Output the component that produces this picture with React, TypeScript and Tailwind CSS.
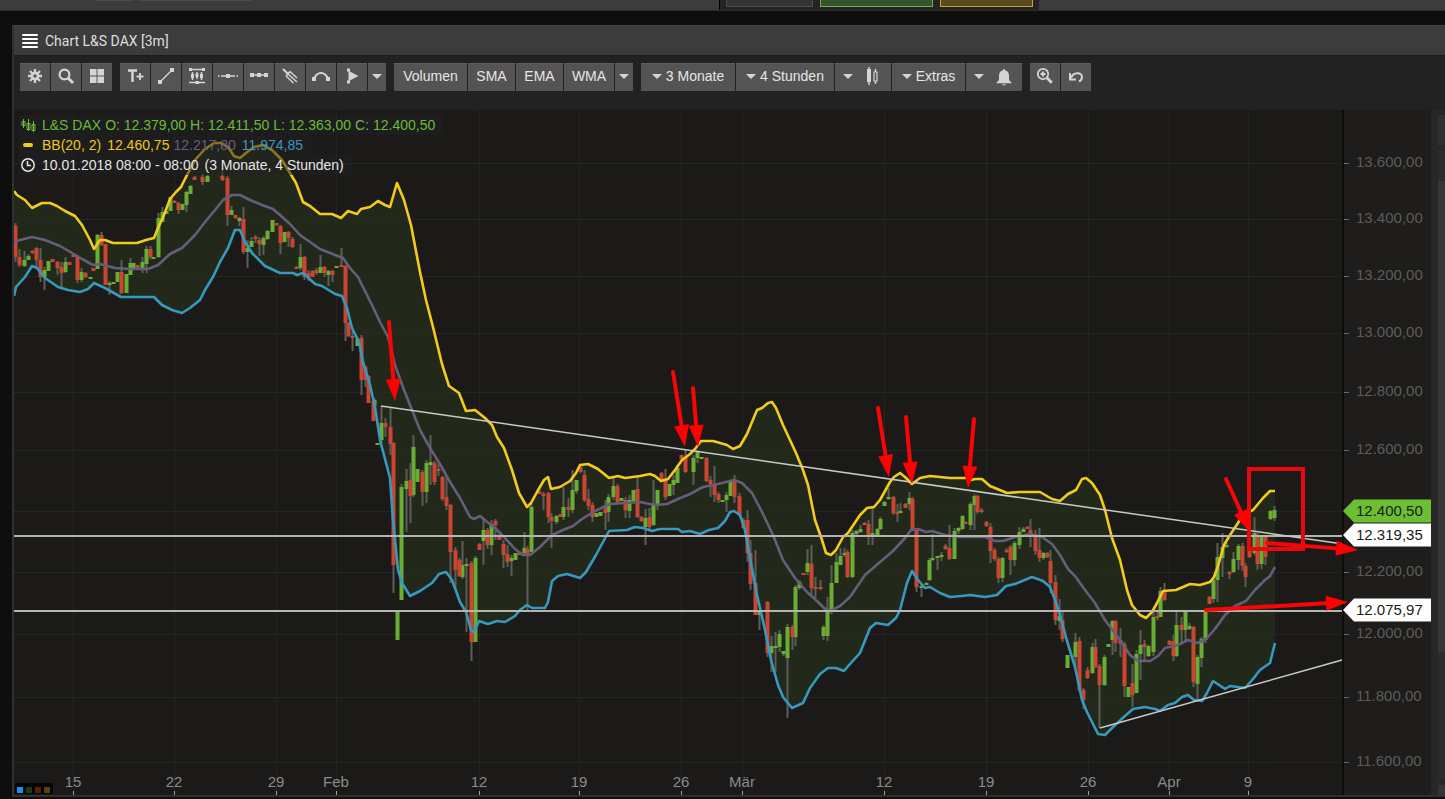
import React from 'react';

type Point = [number, number];
// x, high, body top, body bottom, low
type Candle = [number, number, number, number, number];

const upper: Point[] = [
  [14, 191], [17, 195], [25, 200], [32, 208], [42, 203], [50, 203], [57, 206], [65, 211], [75, 216], [82, 225], [90, 240], [94, 249],
  [100, 240], [105, 240], [113, 243], [137, 243], [146, 240], [154, 238], [158, 228], [164, 215], [170, 199], [176, 192], [181, 187],
  [186, 177], [195, 160], [205, 149], [214, 143], [221, 143], [228, 147], [234, 156], [240, 158], [246, 153], [254, 147], [263, 145],
  [272, 150], [282, 160], [290, 173], [296, 183], [303, 202], [310, 206], [320, 214], [332, 214], [341, 218], [348, 211], [357, 214],
  [361, 209], [370, 207], [378, 201], [385, 205], [390, 207], [397, 183], [404, 200], [411, 225], [420, 272], [426, 300], [433, 327],
  [442, 364], [449, 386], [459, 393], [466, 411], [475, 410], [485, 418], [492, 425], [497, 437], [504, 448], [512, 470], [519, 493],
  [527, 507], [531, 503], [537, 492], [544, 480], [548, 477], [551, 489], [560, 487], [570, 481], [576, 473], [580, 465], [588, 464],
  [598, 469], [609, 478], [618, 476], [625, 478], [640, 476], [650, 474], [655, 476], [661, 481], [668, 479], [675, 470], [682, 460],
  [690, 454], [695, 449], [701, 441], [713, 441], [727, 445], [733, 449], [740, 446], [747, 434], [757, 410], [762, 408], [768, 403],
  [772, 402], [776, 408], [783, 425], [790, 440], [796, 453], [803, 470], [808, 485], [815, 520], [822, 540], [826, 553], [831, 555],
  [836, 550], [843, 537], [848, 533], [854, 524], [860, 515], [867, 508], [874, 507], [880, 500], [890, 482], [894, 477], [900, 473],
  [905, 477], [912, 484], [920, 478], [930, 476], [950, 478], [966, 478], [971, 480], [975, 479], [982, 479], [990, 486], [1007, 493],
  [1020, 492], [1040, 492], [1052, 499], [1060, 501], [1068, 494], [1076, 490], [1082, 479], [1086, 478], [1092, 483], [1100, 495],
  [1105, 510], [1112, 538], [1120, 560], [1127, 590], [1132, 605], [1140, 615], [1146, 618], [1152, 612], [1157, 603], [1163, 591],
  [1176, 590], [1190, 584], [1200, 585], [1210, 582], [1214, 577], [1218, 566], [1224, 545], [1230, 535], [1240, 520], [1245, 514],
  [1253, 510], [1263, 498], [1270, 491], [1275, 491],
];

const middle: Point[] = [
  [14, 242], [20, 240], [32, 237], [45, 240], [60, 246], [72, 253], [82, 259], [93, 265], [100, 264], [115, 268], [130, 269],
  [148, 269], [158, 265], [170, 254], [182, 248], [195, 235], [205, 222], [215, 210], [223, 200], [232, 195], [240, 195], [250, 200],
  [262, 205], [273, 209], [280, 215], [290, 224], [300, 235], [310, 242], [320, 249], [335, 255], [343, 258], [350, 268], [358, 277],
  [366, 293], [372, 305], [380, 322], [388, 337], [395, 365], [404, 390], [412, 410], [420, 430], [430, 448], [440, 464], [450, 482],
  [460, 498], [470, 517], [474, 519], [480, 516], [486, 521], [495, 528], [505, 538], [515, 549], [523, 555], [530, 555], [540, 547],
  [552, 535], [563, 530], [573, 526], [582, 519], [595, 511], [610, 504], [625, 503], [640, 502], [655, 505], [667, 504], [678, 499],
  [690, 494], [703, 487], [718, 484], [734, 480], [742, 483], [752, 493], [763, 514], [773, 535], [783, 560], [795, 578], [807, 592],
  [818, 602], [824, 608], [830, 611], [840, 606], [850, 597], [865, 575], [880, 562], [893, 551], [905, 538], [911, 530], [918, 529],
  [926, 532], [932, 531], [945, 535], [960, 537], [985, 537], [995, 541], [1003, 541], [1015, 537], [1030, 534], [1042, 537],
  [1052, 544], [1060, 555], [1068, 569], [1075, 576], [1085, 590], [1095, 603], [1105, 620], [1120, 640], [1130, 655], [1138, 661],
  [1150, 661], [1158, 656], [1165, 648], [1178, 645], [1188, 640], [1198, 643], [1206, 639], [1215, 629], [1225, 615], [1235, 606],
  [1246, 601], [1255, 590], [1265, 580], [1270, 576], [1275, 567],
];

const lower: Point[] = [
  [14, 296], [16, 287], [25, 277], [32, 266], [37, 268], [45, 278], [58, 287], [68, 290], [80, 292], [88, 289], [94, 283], [105, 288],
  [121, 297], [154, 297], [162, 305], [172, 310], [182, 313], [190, 308], [200, 300], [205, 290], [213, 277], [220, 262], [228, 248],
  [235, 230], [240, 230], [245, 242], [252, 253], [265, 266], [280, 273], [293, 273], [297, 275], [303, 273], [315, 284], [322, 286],
  [335, 294], [342, 296], [347, 308], [352, 328], [359, 342], [363, 362], [370, 385], [375, 407], [380, 440], [390, 478], [393, 520],
  [398, 570], [402, 583], [410, 596], [420, 591], [432, 583], [439, 574], [446, 572], [452, 580], [460, 602], [466, 612], [471, 630],
  [474, 632], [479, 621], [488, 624], [497, 621], [505, 622], [515, 616], [520, 610], [527, 605], [532, 608], [545, 608], [548, 602],
  [552, 581], [558, 576], [567, 574], [580, 578], [586, 572], [596, 555], [609, 531], [627, 530], [635, 527], [643, 528], [652, 531],
  [660, 529], [678, 529], [682, 532], [690, 531], [700, 534], [709, 530], [718, 528], [725, 521], [730, 512], [734, 511], [740, 515],
  [745, 530], [750, 558], [757, 595], [765, 630], [771, 660], [778, 685], [783, 697], [792, 708], [803, 703], [810, 688], [820, 674],
  [828, 668], [836, 668], [844, 671], [850, 664], [860, 653], [870, 628], [876, 623], [888, 625], [896, 618], [900, 610], [907, 583],
  [912, 571], [918, 580], [925, 588], [930, 587], [940, 593], [950, 597], [962, 596], [970, 595], [985, 597], [997, 595], [1006, 586],
  [1015, 584], [1032, 577], [1043, 581], [1050, 587], [1055, 600], [1060, 615], [1067, 641], [1075, 667], [1082, 700], [1087, 712],
  [1098, 734], [1105, 735], [1112, 728], [1125, 716], [1133, 709], [1145, 707], [1155, 709], [1160, 711], [1168, 705], [1175, 703],
  [1182, 697], [1188, 695], [1194, 700], [1202, 701], [1207, 693], [1213, 681], [1225, 689], [1230, 686], [1245, 688], [1253, 679],
  [1260, 670], [1270, 663], [1275, 643],
];

const rising: Candle[] = [
  [24, 251, 260, 266, 267], [28, 254, 256, 260, 260], [44, 267, 270, 277, 290], [48, 261, 261, 271, 271], [65, 257, 262, 272, 273],
  [81, 268, 272, 280, 282], [90, 277, 277, 279, 279], [97, 234, 235, 269, 269], [109, 281, 283, 285, 295], [113, 282, 282, 284, 284],
  [117, 272, 272, 282, 282], [126, 274, 274, 293, 293], [130, 258, 263, 275, 275], [133, 263, 263, 268, 268], [142, 257, 262, 268, 273],
  [146, 246, 249, 264, 273], [153, 257, 257, 259, 259], [158, 213, 218, 257, 258], [162, 207, 212, 222, 222], [166, 211, 211, 214, 214],
  [170, 197, 197, 211, 211], [182, 204, 204, 210, 210], [186, 191, 192, 205, 212], [190, 185, 186, 194, 194], [207, 175, 176, 182, 182],
  [231, 206, 210, 215, 215], [239, 217, 218, 221, 226], [247, 240, 248, 252, 268], [251, 237, 241, 247, 247], [263, 236, 238, 245, 255],
  [267, 230, 231, 239, 240], [272, 220, 220, 232, 232], [284, 232, 232, 242, 242], [300, 244, 257, 268, 270], [320, 255, 267, 273, 273],
  [328, 270, 271, 275, 286], [336, 266, 266, 268, 268], [357, 338, 339, 346, 346], [374, 398, 400, 406, 406], [377, 443, 443, 445, 445],
  [381, 406, 423, 440, 443], [397, 611, 611, 640, 640], [401, 484, 487, 600, 600], [406, 469, 481, 489, 532], [413, 435, 447, 495, 497],
  [417, 469, 469, 482, 482], [426, 460, 463, 492, 503], [430, 435, 462, 465, 485], [462, 541, 565, 577, 579], [466, 558, 564, 566, 632],
  [475, 556, 558, 642, 642], [483, 518, 530, 541, 565], [491, 520, 524, 545, 555], [511, 555, 558, 561, 576], [515, 553, 553, 560, 560],
  [524, 532, 548, 553, 555], [531, 503, 507, 552, 552], [556, 515, 516, 522, 524], [563, 487, 507, 517, 520], [572, 470, 490, 510, 513],
  [576, 480, 480, 491, 494], [596, 513, 513, 517, 517], [600, 512, 512, 516, 516], [608, 494, 497, 512, 522], [613, 477, 486, 497, 500],
  [621, 498, 498, 501, 501], [629, 495, 500, 511, 518], [633, 490, 490, 501, 501], [645, 509, 518, 527, 545], [653, 480, 505, 525, 526],
  [657, 490, 490, 506, 510], [669, 484, 484, 496, 496], [673, 475, 480, 485, 495], [677, 465, 468, 483, 483], [693, 455, 458, 472, 485],
  [697, 450, 451, 458, 463], [701, 457, 457, 459, 459], [722, 500, 500, 502, 502], [726, 492, 495, 500, 512], [730, 480, 481, 496, 496],
  [759, 610, 612, 615, 630], [771, 636, 646, 653, 672], [775, 632, 646, 648, 672], [779, 630, 634, 647, 652], [783, 651, 651, 654, 656],
  [787, 624, 627, 658, 718], [795, 585, 587, 637, 646], [799, 580, 582, 588, 590], [807, 549, 563, 572, 575], [823, 625, 627, 636, 640],
  [827, 597, 612, 636, 641], [831, 565, 583, 612, 614], [836, 553, 562, 583, 583], [840, 548, 556, 565, 565], [844, 548, 553, 555, 557],
  [852, 530, 533, 577, 578], [856, 530, 531, 534, 535], [860, 525, 529, 532, 533], [872, 507, 533, 536, 545], [877, 528, 529, 536, 536],
  [880, 517, 519, 529, 530], [884, 501, 502, 506, 506], [888, 488, 497, 499, 500], [900, 503, 511, 513, 513], [909, 492, 498, 504, 510],
  [921, 584, 586, 588, 597], [926, 582, 583, 585, 585], [929, 558, 560, 580, 581], [932, 534, 558, 560, 561], [937, 556, 556, 558, 570],
  [941, 552, 555, 557, 561], [954, 528, 531, 559, 559], [958, 527, 528, 531, 534], [962, 515, 516, 529, 530], [970, 502, 504, 525, 530],
  [974, 494, 496, 505, 530], [1002, 557, 558, 578, 582], [1014, 541, 543, 560, 566], [1019, 527, 532, 545, 549], [1023, 527, 529, 532, 532],
  [1043, 552, 553, 558, 560], [1059, 599, 616, 621, 630], [1067, 655, 655, 668, 668], [1075, 633, 642, 657, 670], [1092, 643, 647, 673, 674],
  [1104, 655, 657, 685, 686], [1108, 644, 644, 647, 647], [1112, 620, 621, 640, 655], [1128, 687, 687, 697, 697], [1136, 650, 654, 693, 693],
  [1140, 630, 645, 654, 680], [1148, 645, 646, 656, 657], [1153, 612, 617, 652, 656], [1160, 587, 591, 617, 617], [1176, 612, 625, 656, 657],
  [1185, 611, 612, 630, 642], [1189, 623, 626, 629, 630], [1197, 655, 657, 684, 700], [1201, 637, 639, 658, 667], [1205, 610, 611, 640, 643],
  [1213, 578, 580, 599, 603], [1217, 543, 557, 580, 602], [1222, 533, 547, 558, 577], [1226, 543, 545, 547, 548], [1233, 552, 559, 572, 573],
  [1238, 544, 546, 560, 570], [1254, 517, 533, 553, 555], [1261, 535, 537, 564, 569], [1270, 510, 511, 519, 520], [1274, 506, 510, 518, 521],
];

const falling: Candle[] = [
  [15, 223, 226, 257, 262], [19, 249, 257, 265, 267], [32, 250, 251, 253, 254], [36, 247, 248, 260, 267], [40, 248, 260, 277, 282],
  [52, 259, 259, 262, 262], [57, 261, 262, 268, 275], [61, 262, 267, 273, 287], [69, 262, 262, 265, 265], [73, 255, 255, 257, 257],
  [77, 256, 257, 280, 283], [85, 272, 273, 277, 278], [93, 268, 268, 271, 271], [101, 232, 235, 245, 246], [105, 244, 244, 285, 285],
  [121, 260, 272, 293, 294], [137, 265, 265, 268, 268], [150, 246, 249, 257, 259], [174, 200, 201, 203, 203], [178, 202, 203, 210, 214],
  [194, 176, 177, 180, 180], [202, 174, 177, 182, 185], [222, 168, 176, 180, 181], [227, 176, 178, 215, 226], [235, 215, 215, 218, 219],
  [243, 207, 219, 252, 254], [255, 235, 237, 239, 243], [259, 237, 240, 244, 256], [276, 223, 223, 225, 226], [280, 225, 226, 243, 254],
  [288, 231, 232, 238, 247], [292, 237, 239, 247, 248], [296, 266, 267, 269, 269], [304, 256, 257, 277, 280], [308, 270, 273, 277, 281],
  [312, 270, 271, 277, 277], [316, 268, 270, 273, 275], [324, 266, 267, 273, 277], [332, 270, 271, 275, 282], [341, 248, 265, 267, 267],
  [345, 265, 266, 323, 341], [348, 322, 323, 336, 337], [352, 330, 336, 338, 351], [361, 335, 338, 380, 395], [365, 366, 367, 380, 387],
  [368, 375, 376, 403, 403], [373, 398, 401, 421, 421], [385, 418, 423, 427, 437], [390, 407, 427, 444, 455], [393, 442, 443, 565, 593],
  [410, 463, 480, 496, 523], [422, 470, 472, 492, 506], [434, 461, 463, 482, 485], [438, 463, 469, 471, 476], [442, 476, 477, 499, 501],
  [446, 477, 497, 506, 510], [450, 504, 505, 552, 583], [455, 547, 550, 570, 590], [459, 558, 560, 576, 577], [471, 561, 563, 642, 661],
  [479, 543, 544, 550, 550], [487, 528, 530, 545, 549], [495, 519, 521, 525, 540], [499, 531, 536, 540, 540], [503, 540, 544, 555, 568],
  [507, 545, 554, 562, 567], [519, 551, 552, 555, 555], [527, 546, 549, 554, 610], [539, 490, 492, 494, 494], [543, 492, 494, 496, 510],
  [548, 492, 493, 517, 523], [551, 513, 517, 521, 548], [560, 514, 514, 517, 517], [568, 498, 507, 510, 517], [580, 466, 467, 472, 473],
  [584, 470, 475, 500, 502], [588, 489, 499, 506, 510], [592, 502, 505, 517, 522], [605, 500, 508, 513, 530], [617, 484, 486, 502, 503],
  [625, 497, 500, 510, 518], [637, 477, 489, 517, 518], [641, 516, 517, 521, 522], [649, 508, 517, 527, 530], [661, 472, 473, 480, 481],
  [665, 469, 480, 497, 500], [681, 455, 455, 459, 459], [685, 450, 457, 472, 473], [706, 457, 458, 481, 482], [710, 476, 480, 484, 497],
  [714, 466, 485, 495, 502], [718, 492, 494, 500, 503], [734, 475, 481, 497, 503], [739, 493, 496, 515, 516], [743, 518, 520, 528, 528],
  [747, 510, 520, 553, 562], [750, 540, 553, 584, 590], [755, 550, 583, 615, 615], [767, 601, 602, 653, 657], [792, 625, 627, 637, 650],
  [803, 573, 573, 575, 575], [811, 545, 564, 588, 595], [815, 577, 587, 589, 598], [820, 580, 587, 589, 590], [847, 550, 552, 577, 578],
  [864, 522, 523, 525, 525], [868, 520, 524, 535, 545], [893, 496, 497, 513, 515], [897, 504, 512, 514, 522], [905, 503, 504, 508, 508],
  [912, 497, 499, 529, 530], [916, 528, 530, 587, 592], [945, 544, 546, 549, 550], [949, 525, 548, 559, 560], [965, 521, 522, 524, 524],
  [977, 495, 496, 512, 514], [981, 508, 510, 512, 513], [986, 521, 522, 526, 527], [990, 523, 527, 551, 563], [994, 548, 550, 559, 561],
  [998, 557, 559, 578, 583], [1006, 548, 550, 552, 553], [1010, 545, 547, 560, 575], [1027, 526, 527, 529, 529], [1030, 519, 530, 535, 547],
  [1035, 530, 535, 551, 555], [1039, 528, 550, 558, 562], [1047, 552, 553, 557, 558], [1050, 550, 561, 583, 593], [1055, 575, 582, 620, 625],
  [1062, 610, 620, 639, 642], [1079, 637, 641, 690, 692], [1083, 688, 690, 700, 709], [1087, 667, 670, 678, 679], [1095, 639, 647, 667, 668],
  [1099, 664, 666, 685, 728], [1115, 620, 621, 643, 652], [1120, 628, 640, 644, 657], [1124, 642, 644, 686, 697], [1132, 664, 683, 695, 707],
  [1144, 640, 644, 647, 660], [1157, 610, 616, 618, 620], [1164, 583, 591, 600, 601], [1169, 640, 641, 645, 645], [1173, 635, 641, 656, 661],
  [1181, 617, 625, 630, 642], [1193, 626, 627, 682, 687], [1209, 596, 597, 604, 604], [1229, 571, 572, 574, 579], [1242, 543, 546, 566, 571],
  [1245, 563, 566, 577, 587], [1249, 548, 549, 557, 558], [1257, 533, 535, 564, 570], [1265, 535, 537, 557, 565],
];

const priceTicks: [number, string][] = [
  [163, '13.600,00'], [219, '13.400,00'], [276, '13.200,00'], [333, '13.000,00'], [392, '12.800,00'], [450, '12.600,00'],
  [511, ''], [572, '12.200,00'], [634, '12.000,00'], [697, '11.800,00'], [762, '11.600,00'],
];

const dateTicks: [number, string][] = [
  [73, '15'], [174, '22'], [276, '29'], [336, 'Feb'], [479, '12'], [579, '19'], [681, '26'], [742, 'Mär'],
  [884, '12'], [986, '19'], [1088, '26'], [1169, 'Apr'], [1248, '9'],
];

const priceTags = [
  { y: 511, label: '12.400,50', fill: '#6cbf33' },
  { y: 535, label: '12.319,35', fill: '#ffffff' },
  { y: 610, label: '12.075,97', fill: '#ffffff' },
];

// x1, y1, x2, y2 (tip)
const arrows = [
  [389, 322, 395, 401], [673, 372, 685, 447], [693, 388, 698, 447], [878, 408, 889, 477], [906, 417, 912, 484],
  [974, 419, 968, 488], [1226, 479, 1250, 532], [1267, 543, 1358, 550], [1206, 610, 1348, 602],
];

const line = (points: Point[]) => points.map((p) => p.join(',')).join(' ');

const Candles: React.FC<{ data: Candle[]; fill: string }> = ({ data, fill }) => (
  <g>
    {data.map(([x, high, top, bottom, low]) => (
      <g key={x}>
        <rect x={x - 0.5} y={high} width={2} height={low - high} fill="#5c5c59" />
        <rect x={x - 1.5} y={top} width={4} height={bottom - top} fill={fill} />
      </g>
    ))}
  </g>
);

const Arrow: React.FC<{ coords: number[] }> = ({ coords: [x1, y1, x2, y2] }) => {
  const len = Math.hypot(x2 - x1, y2 - y1);
  const angle = (Math.atan2(y2 - y1, x2 - x1) * 180) / Math.PI;
  return (
    <g transform={`translate(${x1} ${y1}) rotate(${angle})`} fill="#ff0000">
      <line x1={0} y1={0} x2={len - 18} y2={0} stroke="#fa0506" strokeWidth={4} strokeLinecap="round" />
      <path d={`M${len} 0 L${len - 22} -7.5 V7.5 Z`} />
    </g>
  );
};

const PriceChart = () => (
  <svg viewBox="14 110 1417 685" className="block w-full h-auto" role="img" aria-label="L&S DAX Kursverlauf">
    <rect x={14} y={110} width={1329} height={685} fill="#1b1a18" />
    <rect x={1343} y={110} width={88} height={685} fill="#1e1d1b" />
    <g stroke="#242422">
      {priceTicks.map(([y]) => <line key={y} x1={14} x2={1342} y1={y + 0.5} y2={y + 0.5} />)}
      {dateTicks.map(([x]) => <line key={x} x1={x + 0.5} x2={x + 0.5} y1={110} y2={794} />)}
    </g>
    <polygon points={line([...upper, ...[...lower].reverse()])} fill="#22291b" />
    <g stroke="#2b3125" strokeWidth={1} opacity={0.35}>
      {priceTicks.map(([y]) => <line key={y} x1={14} x2={1275} y1={y + 0.5} y2={y + 0.5} />)}
    </g>
    <Candles data={rising} fill="#6aad35" />
    <Candles data={falling} fill="#cb4532" />
    <g fill="none" strokeWidth={2.6} strokeLinejoin="round">
      <polyline points={line(middle)} stroke="#665d7c" />
      <polyline points={line(lower)} stroke="#3799bd" />
      <polyline points={line(upper)} stroke="#f3cb1d" />
    </g>

    <g stroke="#b4b4b1" strokeWidth={2}>
      <line x1={14} x2={1343} y1={536} y2={536} />
      <line x1={14} x2={1343} y1={611} y2={611} />
      <line x1={381} y1={406} x2={1343} y2={544} stroke="#c9c9c7" strokeWidth={1.5} />
      <line x1={1100} y1={728} x2={1342} y2={660} stroke="#c9c9c7" strokeWidth={1.5} />
    </g>

    <rect x={1342} y={110} width={2} height={685} fill="#0d0d0c" />
    <g fontFamily='"Liberation Sans", Arial, sans-serif' fontSize={15}>
      {priceTicks.filter(([, label]) => label).map(([y, label]) => (
        <g key={y}>
          <line x1={1344} x2={1349} y1={y + 0.5} y2={y + 0.5} stroke="#6b6b69" />
          <text x={1356} y={y + 4} fill="#5c5c5a">{label}</text>
        </g>
      ))}
      {dateTicks.map(([x, label]) => (
        <g key={x}>
          <text x={x} y={787} fill="#8b8b88" textAnchor="middle">{label}</text>
          <rect x={x} y={791} width={1} height={4} fill="#a0a09d" />
        </g>
      ))}
      {priceTags.map(({ y, label, fill }) => (
        <g key={y}>
          <path d={`M1343 ${y} L1354 ${y - 11.5} H1431 V${y + 11.5} H1354 Z`} fill={fill} />
          <text x={1356} y={y + 5} fill="#1b1a18">{label}</text>
        </g>
      ))}
    </g>

    <rect x={15} y={783} width={38} height={11} fill="#040404" />
    <rect x={17} y={787} width={6} height={6} fill="#1196f0" />
    <rect x={26} y={787} width={6} height={6} fill="#15400f" />
    <rect x={35} y={787} width={6} height={6} fill="#56200f" />
    <rect x={44} y={787} width={6} height={6} fill="#56430f" />

    <rect x={1249} y={469} width={54} height={80} fill="none" stroke="#e8090d" strokeWidth={4} />
    {arrows.map((coords) => <Arrow key={coords.join()} coords={coords} />)}
  </svg>
);

const Legend = () => (
  <div className="absolute left-1 top-[5px] flex flex-col items-start text-sm leading-5 whitespace-nowrap font-['Liberation_Sans',Arial,sans-serif]">
    <div className="flex items-center bg-[#22202180] pl-0.5 pr-2 text-[#6aba3c]">
      <svg className="w-4 h-4 mr-1.5" viewBox="0 0 16 16" fill="none" stroke="currentColor">
        <path d="M3.5 2v9M8.5 2v12M13.5 4v11" />
        <path d="M2 4.500h3v4H2zM7 6.500h3v6H7zM12 7.500h3v6h-3z" />
      </svg>
      <span className="mr-1">L&amp;S DAX</span>
      <span className="mr-1">O: 12.379,00</span>
      <span className="mr-1">H: 12.411,50</span>
      <span className="mr-1">L: 12.363,00</span>
      <span>C: 12.400,50</span>
    </div>
    <div className="flex items-center bg-[#22202180] pl-0.5 pr-2">
      <span className="w-4 mr-1.5 flex justify-center"><span className="w-2.5 h-1 rounded-sm bg-[#f3cb1d]" /></span>
      <span className="mr-1.5 text-[#efc51d]">BB(20, 2)</span>
      <span className="mr-1 text-[#efc51d]">12.460,75</span>
      <span className="mr-1.5 text-[#665d7c]">12.217,80</span>
      <span className="text-[#3799bd]">11.974,85</span>
    </div>
    <div className="flex items-center bg-[#22202180] pl-0.5 pr-2 text-[#e6e6e6]">
      <svg className="w-4 h-4 mr-1.5" viewBox="0 0 16 16" fill="none" stroke="currentColor" strokeWidth={1.5}>
        <circle cx={8} cy={8} r={6.2} />
        <path d="M7.500 4v4.500H11" />
      </svg>
      <span className="mr-1.5">10.01.2018 08:00 - 08:00</span>
      <span>(3 Monate, 4 Stunden)</span>
    </div>
  </div>
);

const Icon: React.FC<{ children: React.ReactNode }> = ({ children }) => (
  <svg viewBox="0 0 20 20" className="w-5 h-5" fill="none" stroke="#d4d4d4" strokeWidth={1.5}>{children}</svg>
);

const Caret = () => (
  <svg viewBox="0 0 10 5" className="w-[10px] h-[5px] shrink-0"><path d="M0 0H10L5 5Z" fill="#d4d4d4" /></svg>
);

const Tool: React.FC<{ label: string; width?: string; children: React.ReactNode }> = ({ label, width = 'w-[30px]', children }) => (
  <button aria-label={label} className={`${width} h-7 pb-[3px] flex items-center justify-center shrink-0 bg-[#545454] border-t border-[#5e5e5e] hover:bg-[#666]`}>
    {children}
  </button>
);

const Picker: React.FC<{ label: string; width: string; options: string[] }> = ({ label, width, options }) => (
  <label className={`${width} h-7 pb-[3px] flex items-center justify-center gap-1 shrink-0 bg-[#545454] border-t border-[#5e5e5e]`}>
    <Caret />
    <select aria-label={label} className="appearance-none bg-transparent text-[#e6e6e6] outline-none [field-sizing:content]">
      {options.map((o) => <option key={o}>{o}</option>)}
    </select>
  </label>
);

const Toolbar = () => (
  <div className="flex flex-wrap gap-2 pl-1.5 pt-[7px] pb-[19px] text-sm text-[#e6e6e6] bg-[#222] border-t border-[#1a1a1a] font-['Liberation_Sans',Arial,sans-serif]">
    <div className="flex gap-px">
      <Tool label="Einstellungen">
        <Icon>
          <path d="M10 3v14M3 10h14M5 5l10 10M15 5L5 15" strokeWidth={2.3} />
          <circle cx={10} cy={10} r={4.4} fill="#d4d4d4" stroke="none" />
          <circle cx={10} cy={10} r={1.7} fill="#545454" stroke="none" />
        </Icon>
      </Tool>
      <Tool label="Suche">
        <Icon>
          <circle cx={8.5} cy={8.5} r={4.9} strokeWidth={2.2} />
          <path d="M12 12l5 5" strokeWidth={3} />
        </Icon>
      </Tool>
      <Tool label="Layout">
        <Icon><path d="M3 3h6.500v6.500H3zM10.500 3H17v6.500h-6.500zM3 10.500h6.500V17H3zM10.500 10.500H17V17h-6.500z" fill="#d4d4d4" stroke="none" /></Icon>
      </Tool>
    </div>

    <div className="flex gap-px">
      <Tool label="Text">
        <Icon>
          <path d="M3 4.500h9M7.500 4.500V16" strokeWidth={2.5} />
          <path d="M11.500 10.500h7M15 7v7" strokeWidth={1.8} />
        </Icon>
      </Tool>
      <Tool label="Linie">
        <Icon>
          <path d="M4 16L16 4" />
          <path d="M2 14h4v4H2zM14 2h4v4h-4z" fill="#d4d4d4" stroke="none" />
        </Icon>
      </Tool>
      <Tool label="Regression">
        <Icon>
          <path d="M2 3.500h16M2 16.500h16" />
          <path d="M5.500 6v8M10 6v7M14.500 6v8" />
          <path d="M2 2h3v3H2zM15 2h3v3h-3zM8.500 15h3.500v3H8.500zM4 8h3v4H4zM8.500 7.500h3v3.500h-3zM13 8h3v4h-3z" fill="#d4d4d4" stroke="none" />
        </Icon>
      </Tool>
      <Tool label="Horizontale">
        <Icon>
          <path d="M3 10h14M0 10h1.500M18.500 10H20" />
          <path d="M8 8h4v4H8z" fill="#d4d4d4" stroke="none" />
        </Icon>
      </Tool>
      <Tool label="Strecke">
        <Icon>
          <path d="M1 9h18" />
          <path d="M1 7h4v4H1zM8 7h4v4H8zM15 7h4v4h-4z" fill="#d4d4d4" stroke="none" />
        </Icon>
      </Tool>
      <Tool label="Pitchfork">
        <Icon>
          <path d="M3 3l4.500 4.500" strokeWidth={2} />
          <path d="M6 10l4-4.500" strokeWidth={1.8} />
          <path d="M10 5.500l7 6.500M7.500 7.500L17 16M6 10l7.500 7" strokeWidth={1.5} />
        </Icon>
      </Tool>
      <Tool label="Bogen">
        <Icon>
          <path d="M3 13C6 5 14 5 17 13" strokeWidth={2} />
          <path d="M1 11h4v4H1zM15 11h4v4h-4z" fill="#d4d4d4" stroke="none" />
        </Icon>
      </Tool>
      <Tool label="Muster">
        <Icon><path d="M5 2.500h3v3l8.500 4.500L8 14.500v3H5v-3h1.500v-9H5z" fill="#d4d4d4" stroke="none" /></Icon>
      </Tool>
      <Tool label="Weitere Werkzeuge" width="w-[18px]"><Caret /></Tool>
    </div>

    <div className="flex gap-px">
      <Tool label="Volumen" width="w-[73px]">Volumen</Tool>
      <Tool label="SMA" width="w-[47px]">SMA</Tool>
      <Tool label="EMA" width="w-[47px]">EMA</Tool>
      <Tool label="WMA" width="w-[50px]">WMA</Tool>
      <Tool label="Weitere Indikatoren" width="w-[18px]"><Caret /></Tool>
    </div>

    <div className="flex gap-px">
      <Picker label="Zeitraum" width="w-[94px]" options={['3 Monate', '6 Monate', '1 Jahr']} />
      <Picker label="Intervall" width="w-[98px]" options={['4 Stunden', '1 Stunde', '1 Tag']} />
      <Tool label="Charttyp" width="w-[56px]">
        <span className="flex items-center gap-2.5">
          <Caret />
          <Icon>
            <path d="M6 1v18M12.500 3v15" />
            <path d="M4 3h4v13H4z" fill="#d4d4d4" stroke="none" />
            <path d="M11 6h3v9h-3z" fill="#545454" strokeWidth={1.2} />
          </Icon>
        </span>
      </Tool>
      <Tool label="Extras" width="w-[73px]">
        <span className="flex items-center gap-1"><Caret />Extras</span>
      </Tool>
      <Tool label="Alarm" width="w-[56px]">
        <span className="flex items-center gap-2.5">
          <Caret />
          <Icon>
            <path d="M10 3c-1 0-1 .800-1 1.300C6 5 5 7 5 10v4l-2.500 2.500v.800h15v-.800L15 14v-4c0-3-1-5-4-5.700C11 3.800 11 3 10 3zM8 18.300h4c-.500 1.500-3.500 1.500-4 0z" fill="#d4d4d4" stroke="none" />
          </Icon>
        </span>
      </Tool>
    </div>

    <div className="flex gap-px">
      <Tool label="Vergrößern">
        <Icon>
          <circle cx={8} cy={8} r={5.2} strokeWidth={1.8} />
          <path d="M11.800 11.800l5 5" strokeWidth={2.8} />
          <path d="M5.500 8h5M8 5.500v5" strokeWidth={2.2} />
        </Icon>
      </Tool>
      <Tool label="Rückgängig">
        <Icon>
          <path d="M5 12C7 6 16 5.500 16 11c0 2-1 3.500-3 4.500" strokeWidth={2} />
          <path d="M4 7v6.500h6" strokeWidth={2} />
        </Icon>
      </Tool>
    </div>
  </div>
);

const TopBar = () => (
  <header className="flex h-[11px] bg-[#3c3c3c] border-b border-[#2c2c2c] overflow-hidden">
    <div className="w-1/2 max-w-[719px] flex gap-1.5 pl-[95px]">
      <div className="w-[38px] h-px bg-[#4b4b4b]" />
      <div className="w-[112px] h-px bg-[#4b4b4b]" />
    </div>
    <div className="flex h-[11px] gap-[7px] px-[6px] bg-[#242424] border-l border-black">
      <div className="w-[87px] h-[7px] bg-[#333] border border-t-0 border-[#4c4c4c]" />
      <div className="w-[113px] h-[7px] bg-[#36542a] border border-t-0 border-[#6cae48]" />
      <div className="w-[93px] h-[7px] bg-[#5a4a20] border border-t-0 border-[#cda02e]" />
    </div>
  </header>
);

export default function App() {
  return (
    <div className="min-h-screen bg-[#0e0e0e] overflow-x-hidden">
      <TopBar />
      <main className="mt-[14px] ml-3 border-l-2 border-b-2 border-[#303030] bg-[#222]">
        <div className="flex items-center h-[30px] gap-[7px] pl-2 bg-[#3c3c3c] border-t border-[#474747] font-[Roboto,sans-serif]">
          <button aria-label="Menü" className="flex flex-col gap-0.5 w-4">
            <span className="h-[2px] rounded-full bg-white" />
            <span className="h-[2px] rounded-full bg-white" />
            <span className="h-[2px] rounded-full bg-white" />
            <span className="h-[2px] rounded-full bg-white" />
          </button>
          <h1 className="text-sm text-[#dedede]">Chart L&amp;S DAX [3m]</h1>
        </div>
        <Toolbar />
        <div className="flex">
          <div className="relative flex-1 min-w-0">
            <PriceChart />
            <Legend />
          </div>
          <div className="w-[14px] shrink-0 flex flex-col gap-1.5 pl-[7px] pt-[5px] bg-[#272727]">
            <div className="h-[30px] bg-[#303030]" />
            <div className="flex-1 flex flex-col bg-[#2c2c2c]">
              <div className="h-[30px]" />
              <div className="h-3/4 bg-[#363636]" />
            </div>
            <div className="h-[10px] bg-[#343434]" />
          </div>
        </div>
      </main>
    </div>
  );
}
